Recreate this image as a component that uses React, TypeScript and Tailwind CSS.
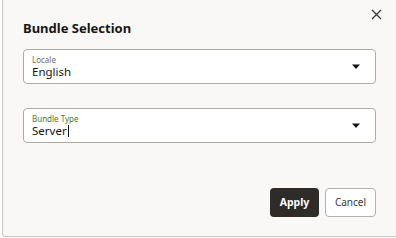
import React from "react";

const Caret: React.FC = () => (
   <svg width="10" height="6" viewBox="0 0 10 6" className="shrink-0">
      <path d="M1 0.5h8L5 5z" fill="#161513" />
   </svg>
);

const SelectField: React.FC<{ label: string; value: string; active?: boolean }> = ({
   label,
   value,
   active,
}) => (
   <div className="flex h-[35px] items-center rounded-[4px] border border-[#aeaca6] bg-white pl-[8px] pr-[14px]">
      <div className="flex flex-1 flex-col leading-none">
         <span
            className={
               "text-[8px] leading-[10px] " +
               (active ? "text-[#4e7a32]" : "text-[#6f6c68]")
            }
         >
            {label}
         </span>
         <span className="flex items-center text-[11.5px] leading-[14px] text-[#161513]">
            {value}
            {active && <span className="ml-px inline-block h-[12px] w-px bg-[#161513]" />}
         </span>
      </div>
      <Caret />
   </div>
);

export default function App() {
   return (
      <div className="h-[238px] w-[396px] bg-white font-['Noto_Sans',sans-serif]">
         <div className="ml-[2px] flex h-[237px] flex-col rounded-bl-[4px] border-b border-l border-[#c9c7c3] bg-[#f9f8f6]">
            <div className="flex justify-end pr-[14px] pt-[9px]">
               <svg width="11" height="11" viewBox="0 0 11 11">
                  <path d="M1 1l9 9M10 1l-9 9" stroke="#3a3835" strokeWidth="1.3" />
               </svg>
            </div>
            <h1 className="ml-[20px] mt-[-2px] text-[13px] font-bold leading-[20px] text-[#161513]">
               Bundle Selection
            </h1>
            <div className="ml-[20px] mr-[20px] mt-[11px] flex flex-col gap-[24px]">
               <SelectField label="Locale" value="English" />
               <SelectField label="Bundle Type" value="Server" active />
            </div>
            <div className="mr-[20px] mt-[45px] flex justify-end gap-[6px]">
               <button className="h-[29px] w-[49px] rounded-[4px] bg-[#2f2b28] text-[10.5px] font-bold text-white">
                  Apply
               </button>
               <button className="h-[29px] w-[51px] rounded-[4px] border border-[#b3b1ac] bg-white text-[10px] text-[#3a3835]">
                  Cancel
               </button>
            </div>
         </div>
      </div>
   );
}
